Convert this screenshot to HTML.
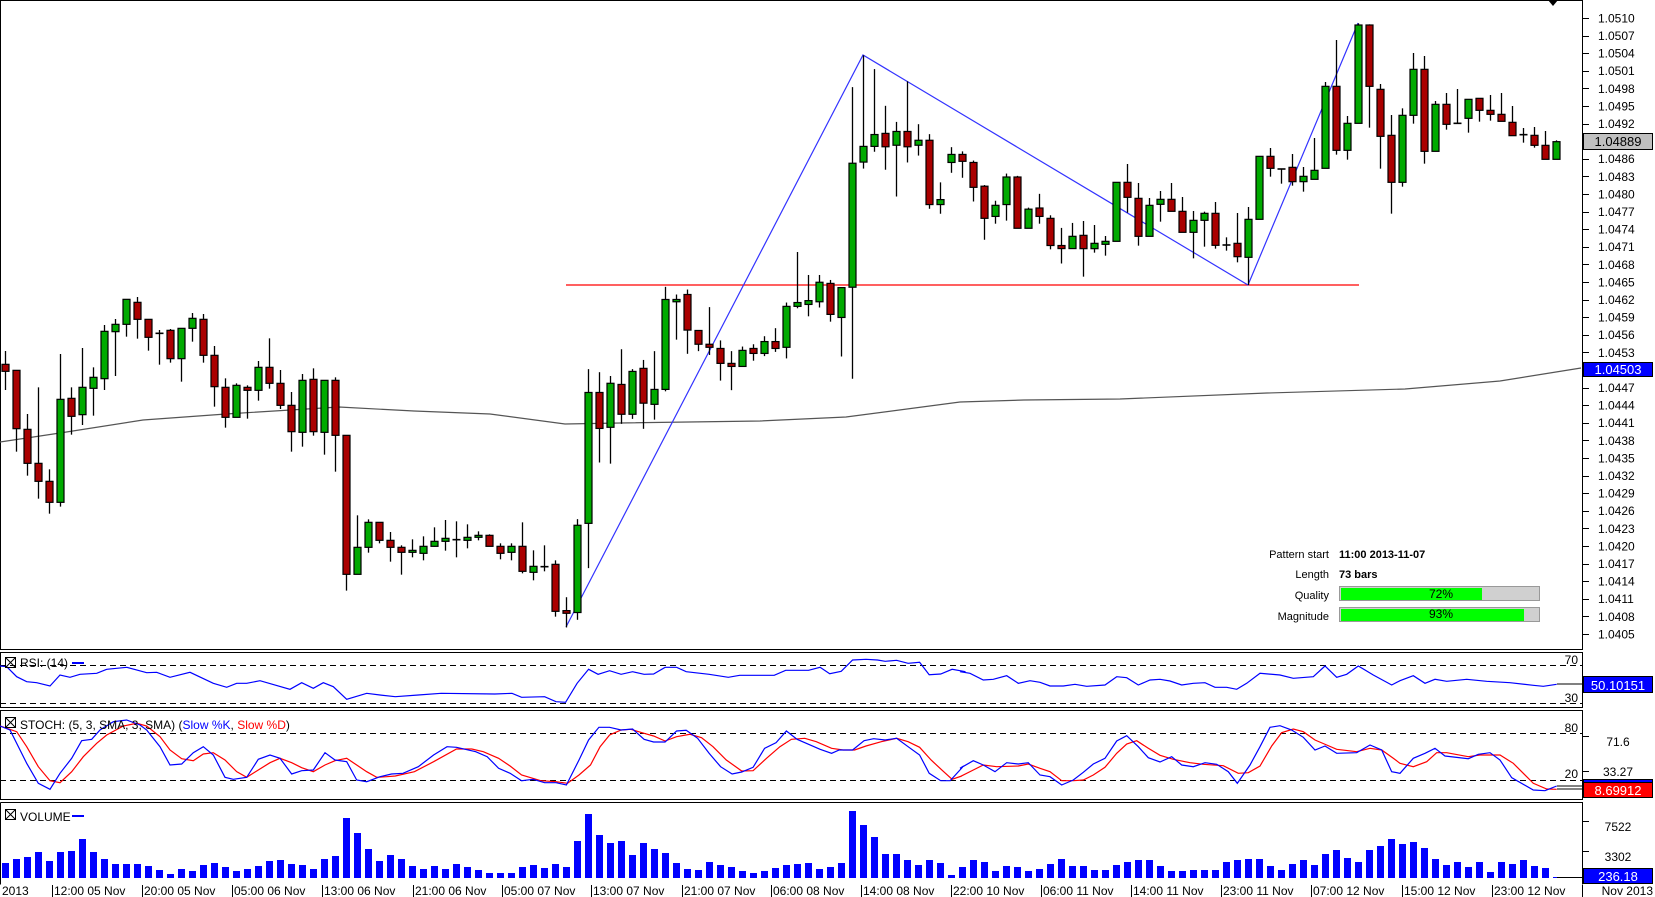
<!DOCTYPE html>
<html><head><meta charset="utf-8"><style>
html,body{margin:0;padding:0;background:#fff;overflow:hidden}
svg{display:block;font-family:"Liberation Sans",Arial,sans-serif}
</style></head><body>
<svg id="s" width="1655" height="897" viewBox="0 0 1655 897" xmlns="http://www.w3.org/2000/svg">
<rect width="1655" height="897" fill="#fff"/>
<g id="grid" fill="none" stroke="#000" stroke-width="1" shape-rendering="crispEdges">
  <path d="M0.5 0.5H1582.5V649.5H0.5Z"/>
  <path d="M0.5 652.5H1582.5V707.5H0.5Z"/>
  <path d="M0.5 710.5H1582.5V799.5H0.5Z"/>
  <path d="M0.5 802.5H1582.5V884.5"/>
  <path d="M0.5 802.5V884.5"/>
  <path d="M0 665.5H1582M0 703.5H1582M0 733.5H1582M0 780.5H1582" stroke-dasharray="6,4"/>
</g>
<g id="ma"></g>
<g id="pat"></g>
<g id="candles"></g>
<g id="ind"></g>
<g id="vol"></g>
<g id="ticks" stroke="#000" shape-rendering="crispEdges"></g>
<path d="M1548 0H1558L1553 6Z" fill="#000"/>
<g font-size="12" fill="#000">
<text x="1598" y="22.5">1.0510</text>
<text x="1598" y="40">1.0507</text>
<text x="1598" y="57.5">1.0504</text>
<text x="1598" y="75">1.0501</text>
<text x="1598" y="93">1.0498</text>
<text x="1598" y="110.5">1.0495</text>
<text x="1598" y="128">1.0492</text>
<text x="1598" y="163">1.0486</text>
<text x="1598" y="181">1.0483</text>
<text x="1598" y="198.5">1.0480</text>
<text x="1598" y="216">1.0477</text>
<text x="1598" y="233.5">1.0474</text>
<text x="1598" y="251">1.0471</text>
<text x="1598" y="269">1.0468</text>
<text x="1598" y="286.5">1.0465</text>
<text x="1598" y="304">1.0462</text>
<text x="1598" y="321.5">1.0459</text>
<text x="1598" y="339">1.0456</text>
<text x="1598" y="357">1.0453</text>
<text x="1598" y="392">1.0447</text>
<text x="1598" y="409.5">1.0444</text>
<text x="1598" y="427">1.0441</text>
<text x="1598" y="445">1.0438</text>
<text x="1598" y="462.5">1.0435</text>
<text x="1598" y="480">1.0432</text>
<text x="1598" y="497.5">1.0429</text>
<text x="1598" y="515">1.0426</text>
<text x="1598" y="533">1.0423</text>
<text x="1598" y="550.5">1.0420</text>
<text x="1598" y="568">1.0417</text>
<text x="1598" y="585.5">1.0414</text>
<text x="1598" y="603">1.0411</text>
<text x="1598" y="621">1.0408</text>
<text x="1598" y="638.5">1.0405</text>
</g>
<rect x="1583.5" y="133.5" width="69" height="16" fill="#c0c0c0" stroke="#000"/>
<text x="1618" y="146" font-size="13" text-anchor="middle">1.04889</text>
<rect x="1583.5" y="362.5" width="69" height="14" fill="#0000ff" stroke="#000"/>
<text x="1618" y="374" font-size="13" text-anchor="middle" fill="#fff">1.04503</text>
<g font-size="11">
<text x="1329" y="558" text-anchor="end">Pattern start</text>
<text x="1339" y="558" font-weight="bold">11:00 2013-11-07</text>
<text x="1329" y="578" text-anchor="end">Length</text>
<text x="1339" y="578" font-weight="bold">73 bars</text>
<text x="1329" y="599" text-anchor="end">Quality</text>
<text x="1329" y="620" text-anchor="end">Magnitude</text>
<rect x="1339.5" y="586.5" width="200" height="14" fill="#d0d0d0" stroke="#999"/>
<rect x="1341" y="588" width="141" height="12" fill="#00ff00"/>
<text x="1441" y="598" text-anchor="middle" font-size="12">72%</text>
<rect x="1339.5" y="607.5" width="200" height="14" fill="#d0d0d0" stroke="#999"/>
<rect x="1341" y="609" width="183" height="12" fill="#00ff00"/>
<text x="1441" y="618" text-anchor="middle" font-size="12">93%</text>
</g>
<g font-size="12">
<rect x="5.5" y="657.5" width="10" height="10" fill="none" stroke="#000"/><path d="M5.5 657.5L15.5 667.5M15.5 657.5L5.5 667.5" stroke="#000"/>
<text x="20" y="667">RSI: (14)</text><path d="M72 663H84" stroke="#00f" stroke-width="2"/>
<rect x="5.5" y="717.5" width="10" height="10" fill="none" stroke="#000"/><path d="M5.5 717.5L15.5 727.5M15.5 717.5L5.5 727.5" stroke="#000"/>
<text x="20" y="729">STOCH: (5, 3, SMA, 3, SMA) (<tspan fill="#00f">Slow %K</tspan>, <tspan fill="#f00">Slow %D</tspan>)</text>
<rect x="5.5" y="809.5" width="10" height="10" fill="none" stroke="#000"/><path d="M5.5 809.5L15.5 819.5M15.5 809.5L5.5 819.5" stroke="#000"/>
<text x="20" y="821">VOLUME</text><path d="M72 816H84" stroke="#00f" stroke-width="2"/>
<text x="1578" y="664" text-anchor="end">70</text>
<text x="1578" y="702" text-anchor="end">30</text>
<text x="1578" y="732" text-anchor="end">80</text>
<text x="1578" y="778" text-anchor="end">20</text>
<text x="1618" y="746" text-anchor="middle">71.6</text>
<text x="1618" y="776" text-anchor="middle">33.27</text>
<text x="1618" y="831" text-anchor="middle">7522</text>
<text x="1618" y="861" text-anchor="middle">3302</text>
</g>
<rect x="1583.5" y="676.5" width="69" height="16" fill="#0000ff" stroke="#000"/>
<text x="1618" y="690" font-size="13" text-anchor="middle" fill="#fff">50.10151</text>
<rect x="1583.5" y="779.5" width="69" height="3" fill="#0000ff" stroke="#000"/>
<rect x="1583.5" y="782.5" width="69" height="15" fill="#ff0000" stroke="#000"/>
<text x="1618" y="795" font-size="13" text-anchor="middle" fill="#fff">8.69912</text>
<rect x="1583.5" y="868.5" width="69" height="15" fill="#0000ff" stroke="#000"/>
<text x="1618" y="881" font-size="13" text-anchor="middle" fill="#fff">236.18</text>
<g font-size="12">
<text x="2" y="895">2013</text>
<text x="54" y="895">12:00 05 Nov</text>
<text x="144" y="895">20:00 05 Nov</text>
<text x="234" y="895">05:00 06 Nov</text>
<text x="324" y="895">13:00 06 Nov</text>
<text x="415" y="895">21:00 06 Nov</text>
<text x="504" y="895">05:00 07 Nov</text>
<text x="593" y="895">13:00 07 Nov</text>
<text x="684" y="895">21:00 07 Nov</text>
<text x="773" y="895">06:00 08 Nov</text>
<text x="863" y="895">14:00 08 Nov</text>
<text x="953" y="895">22:00 10 Nov</text>
<text x="1043" y="895">06:00 11 Nov</text>
<text x="1133" y="895">14:00 11 Nov</text>
<text x="1223" y="895">23:00 11 Nov</text>
<text x="1313" y="895">07:00 12 Nov</text>
<text x="1404" y="895">15:00 12 Nov</text>
<text x="1494" y="895">23:00 12 Nov</text>
<text x="1653" y="895" text-anchor="end">Nov 2013</text>
</g>
<script>
var NS="http://www.w3.org/2000/svg";
function el(p,t,a){var e=document.createElementNS(NS,t);for(var k in a)e.setAttribute(k,a[k]);document.getElementById(p).appendChild(e);return e;}
function X(n){return 5.3+11.0*(n-1);}
var A=[['r',253,274,213,330],['r',271,446,271,515],['r',448,550,402,587],['r',550,604,322,656],['r',604,667,568,701],['g',358,667,222,680],['r',355,409,322,464],['g',322,404,204,435],['g',292,325,262,407],['g',154,296,135,330],['g',133,155,117,288],['g',58,133,58,170],['r',67,118,51,176],['r',118,172,118,212],['d',160,160,150,254],['r',151,236,147,248],['g',145,236,145,305],['g',115,145,99,185],['r',118,226,102,248],['r',226,320,198,380],['r',322,412,295,443],['g',316,412,310,412],['r',322,331,316,416],['g',262,331,243,362],['r',262,310,175,326],['r',310,376,270,387],['r',376,455,336,515],['g',301,457,282,500],['r',298,455,265,467],['g',301,457,301,524],['r',301,466,292,575],['r',466,883,466,932],['g',802,883,706,883],['g',727,802,718,818],['r',727,781,727,790],['r',781,802,756,845],['r',802,817,796,884],['g',811,817,778,832],['g',799,820,769,841],['g',784,799,742,800],['g',775,784,720,812],['d',779,779,724,832],['g',772,781,733,805],['g',766,772,754,781],['r',766,799,763,799],['r',799,820,790,838],['g',799,817,790,841],['r',799,874,727,880],['g',859,877,811,901],['d',860,860,796,874],['r',853,994,841,1010]];
var B=[['r',1491,1498,1456,1535],['g',1268,1496,1252,1515],['g',921,1263,860,1380],['r',921,1015,868,1104],['g',897,1012,878,1107],['r',900,978,808,1003],['g',866,978,860,990],['r',858,949,836,1016],['g',913,952,813,992],['g',678,913,645,918],['g',678,684,665,783],['r',665,758,652,820],['r',759,795,759,813],['r',795,803,698,823],['r',806,845,785,890],['r',845,853,813,915],['g',811,853,801,853],['r',806,819,795,838],['g',788,819,774,826],['r',788,806,753,815],['g',696,803,686,832],['g',686,696,554,701],['g',681,691,614,722],['g',633,684,614,699],['r',636,717,627,736],['g',647,725,647,827],['g',322,646,123,885],['g',278,319,40,336],['g',247,278,76,292],['r',244,279,172,339],['g',239,275,214,409],['r',239,279,108,320],['g',262,275,220,302],['r',262,430,246,441],['g',417,430,372,454],['g',299,320,280,347],['r',299,317,291,360],['r',320,385,315,422],['r',382,466,379,522],['g',432,461,420,480],['g',358,430,349,472],['r',358,492,355,492],['g',442,492,438,492],['r',439,461,402,480],['r',466,537,458,547],['r',537,545,491,584],['g',513,545,478,545]];
var C=[['r',676,716,633,800],['g',700,716,645,728],['g',694,703,678,737],['g',517,694,517,694],['r',517,562,462,608],['r',565,679,519,707],['g',586,679,564,679],['g',568,583,543,635],['r',568,604,519,604],['r',604,667,561,667],['g',631,667,603,745],['g',610,631,605,710],['r',610,706,576,716],['d',705,705,682,722],['r',700,740,609,757],['g',628,742,591,825],['g',439,628,439,628],['r',439,475,414,500],['d',477,477,477,521],['r',472,515,432,527],['g',499,515,471,545],['g',481,508,384,508],['g',229,475,216,475],['r',229,421,90,434],['g',340,421,318,449],['g',45,340,40,340],['r',45,229,43,353],['r',238,379,222,476],['r',376,517,315,611],['g',316,517,295,530],['g',178,316,129,341],['r',178,424,138,461],['g',283,424,273,424],['r',283,343,249,359],['d',340,340,237,340],['g',268,325,268,368],['r',265,301,265,335],['r',301,313,255,332],['r',313,334,249,334],['r',337,377,288,377],['d',374,374,354,398],['r',376,406,351,413],['r',406,448,363,448],['g',395,448,391,448]];
var all=[];
A.forEach(function(c){all.push([c[0],280+c[1]/3,280+c[2]/3,280+c[3]/3,280+c[4]/3]);});
B.forEach(function(c){all.push([c[0],40+c[1]/2.613,40+c[2]/2.613,40+c[3]/2.613,40+c[4]/2.613]);});
C.forEach(function(c){all.push([c[0],10+c[1]/3,10+c[2]/3,10+c[3]/3,10+c[4]/3]);});
var ma=[[0,442],[60,433],[143,420],[226,414],[339,407],[414,411],[490,414],[565,424],[620,423],[760,421],[846,417],[960,402],[1024,400],[1120,399],[1267,393],[1405,389],[1500,381],[1581,368]];
el('ma','polyline',{points:ma.map(function(p){return p.join(',')}).join(' '),fill:'none',stroke:'#555','stroke-width':1.2});
el('pat','line',{x1:566,y1:285,x2:1359,y2:285,stroke:'#f00','stroke-width':1.3});
el('pat','polyline',{points:'566,627 863,55 1248,285 1358,23',fill:'none',stroke:'#3333ff','stroke-width':1.2});
all.forEach(function(c,i){
  var x=Math.round(X(i+1))+0.5;
  el('candles','line',{x1:x,y1:c[3],x2:x,y2:c[4],stroke:'#000','stroke-width':1.3});
  if(c[0]=='d'){el('candles','line',{x1:x-4,y1:c[1],x2:x+4,y2:c[1],stroke:'#000','stroke-width':1.6});}
  else{var h=Math.max(c[2]-c[1],2);el('candles','rect',{x:x-3.5,y:c[1],width:7,height:h,fill:c[0]=='g'?'#00aa00':'#aa0000',stroke:'#000','stroke-width':1.2});}
});
function pl(pts,ox,sx,oy,sy){return pts.map(function(p){return (ox+p[0]/sx).toFixed(1)+','+(oy+p[1]/sy).toFixed(1)}).join(' ');}
var rsi=[
pl([[0,78],[20,80],[50,110],[80,125],[110,128],[150,138],[180,105],[210,112],[240,103],[290,100],[320,88],[380,82],[440,98],[470,97],[510,112],[570,97],[640,130],[680,142],[710,130],[740,130],[780,122],[870,148],[905,128],[940,145],[970,128],[1000,140],[1040,178],[1100,160],[1140,165]],0,3,640,3),
pl([[40,170],[100,165],[160,160],[300,162],[345,160],[370,172],[430,170],[460,185],[485,187],[515,130],[545,88],[570,103],[600,92],[630,103],[660,95],[690,103],[715,102],[745,82],[775,82],[800,95],[860,103],[910,112],[940,106],[1030,106],[1060,91],[1120,91],[1150,82],[1175,101],[1205,94],[1235,60],[1270,58],[1300,60],[1320,64],[1350,61],[1380,70],[1410,67],[1435,104],[1465,102],[1495,88],[1530,95]],380,2.613,640,3),
pl([[0,95],[30,100],[70,120],[100,118],[140,107],[175,130],[210,122],[240,127],[270,138],[310,138],[345,133],[380,139],[435,135],[470,110],[500,113],[535,135],[570,120],[600,118],[630,123],[665,135],[700,130],[735,128],[765,142],[800,142],[830,148],[860,130],[900,100],[960,105],[1000,115],[1060,110],[1095,78],[1130,112],[1160,103],[1195,78],[1240,105],[1295,135]],960,3,640,3),
pl([[0,182],[40,167],[75,190],[105,178],[140,184],[200,178],[260,184],[330,188],[400,196],[430,199],[470,193]],1400,3,620,3)].join(' ');
el('ind','polyline',{points:rsi,fill:'none',stroke:'#0000ff','stroke-width':1.2});
el('ind','line',{x1:1557,y1:684,x2:1582,y2:684,stroke:'#000'});
var kk=[
pl([[0,258],[30,270],[80,370],[115,430],[150,448],[180,400],[215,355],[245,302],[275,298],[300,270],[340,245],[380,240],[420,255],[440,270],[480,320],[510,375],[545,372],[580,338],[610,320],[640,345],[675,412],[700,418],[740,412],[775,358],[810,345],[840,355],[875,402],[905,392],[940,390],[975,338],[1005,360],[1040,365],[1070,420],[1100,425],[1140,410]],0,3,640,3),
pl([[30,402],[60,400],[100,380],[140,345],[175,320],[200,322],[250,335],[280,350],[310,385],[340,400],[370,422],[400,418],[430,428],[460,428],[487,435],[520,360],[545,300],[572,262],[600,262],[630,270],[660,267],[690,298],[715,306],[745,306],[775,273],[800,271],[830,295],[860,340],[890,380],[920,402],[945,396],[975,382],[1005,325],[1035,308],[1062,273],[1090,298],[1120,313],[1150,328],[1180,340],[1200,330],[1235,330],[1265,302],[1290,296],[1320,300],[1350,295],[1380,320],[1410,345],[1435,400],[1465,422],[1490,422],[1525,378]],380,2.613,640,3),
pl([[0,385],[40,362],[70,375],[105,395],[140,368],[175,372],[205,368],[240,405],[270,410],[305,435],[340,420],[370,397],[400,372],[435,355],[470,303],[500,287],[535,320],[565,353],[600,366],[635,350],[665,375],[700,380],[735,368],[770,373],[805,395],[832,430],[870,375],[900,320],[930,262],[960,257],[995,270],[1030,292],[1065,330],[1095,318],[1130,340],[1190,338],[1230,315],[1265,330],[1295,395]],960,3,640,3),
pl([[0,460],[40,415],[75,400],[105,385],[135,408],[205,416],[235,403],[270,398],[300,420],[335,473],[400,510],[435,512],[470,498]],1400,3,620,3)].join(' ');
var dd=[
pl([[0,258],[50,275],[80,320],[115,380],[150,422],[180,428],[215,395],[250,350],[290,310],[320,285],[370,258],[410,250],[440,258],[480,290],[510,330],[545,356],[580,362],[610,342],[640,338],[675,360],[710,395],[740,412],[775,390],[810,368],[840,355],[875,368],[905,383],[940,395],[975,375],[1005,362],[1040,355],[1070,375],[1100,395],[1130,412],[1160,410]],0,3,640,3),
pl([[40,408],[90,395],[140,365],[200,327],[240,327],[270,335],[310,355],[340,378],[370,405],[420,422],[460,425],[490,430],[520,405],[550,375],[575,320],[600,285],[630,270],[655,268],[690,280],[715,288],[745,303],[775,290],[810,283],[840,293],[870,320],[905,360],[945,393],[975,392],[1010,355],[1045,320],[1075,298],[1110,295],[1140,305],[1180,325],[1210,330],[1240,330],[1270,318],[1310,305],[1350,295],[1380,305],[1410,322],[1440,360],[1470,392],[1495,418],[1520,408]],380,2.613,640,3),
pl([[0,410],[40,390],[70,375],[110,380],[175,378],[205,372],[240,385],[270,395],[305,422],[340,422],[370,420],[400,405],[435,382],[470,340],[500,312],[530,302],[565,325],[600,346],[640,358],[690,368],[730,373],[790,377],[835,400],[865,398],[900,378],[935,318],[965,278],[1000,267],[1030,275],[1065,300],[1100,315],[1130,328],[1190,335],[1230,325],[1265,330],[1300,355]],960,3,640,3),
pl([[0,430],[40,440],[80,425],[110,398],[140,398],[205,410],[240,405],[300,405],[340,430],[400,490],[440,507],[470,508]],1400,3,620,3)].join(' ');
el('ind','polyline',{points:dd,fill:'none',stroke:'#ff0000','stroke-width':1.2});
el('ind','polyline',{points:kk,fill:'none',stroke:'#0000ff','stroke-width':1.2});
el('ind','line',{x1:1557,y1:786,x2:1582,y2:786,stroke:'#000'});
el('ind','line',{x1:1557,y1:789,x2:1582,y2:789,stroke:'#000'});
var V=[15,19,21,26,17,26,27,39,26,19,14,14,14,12,8,4,9,7,13,15,11,7,9,12,17,18,14,13,9,19,22,60,45,29,17,23,19,12,9,12,9,14,11,8,5,5,5,11,13,10,14,11,37,64,43,35,37,23,35,29,25,15,9,8,16,13,11,7,5,7,10,13,14,15,9,11,15,67,53,41,24,24,18,13,18,15,3,11,18,16,7,12,11,7,9,14,19,12,12,8,8,13,16,18,18,12,7,7,8,8,8,16,18,19,19,12,8,14,18,13,24,28,20,16,28,32,39,34,36,30,19,13,16,11,16,6,16,14,18,12,10,1];
V.forEach(function(h,i){var x=Math.round(X(i+1))-3;el('vol','rect',{x:x,y:878-h,width:7,height:h,fill:'#0000ff'});});
el('vol','line',{x1:1557,y1:877.5,x2:1582,y2:877.5,stroke:'#000'});
var d='';
for(var i=0;i<36;i++){var y=Math.round(18+17.6*i)+0.5;d+='M1582 '+y+'H1589';}
[741,776,826,856].forEach(function(y){d+='M1582 '+(y-4.5)+'H1589';});
[52,142,232,322,413,502,591,682,771,861,951,1041,1131,1221,1311,1402,1492,1582].forEach(function(x){d+='M'+(x+0.5)+' 885V897';});
el('ticks','path',{d:d,fill:'none'});
</script>
</svg>
</body></html>
